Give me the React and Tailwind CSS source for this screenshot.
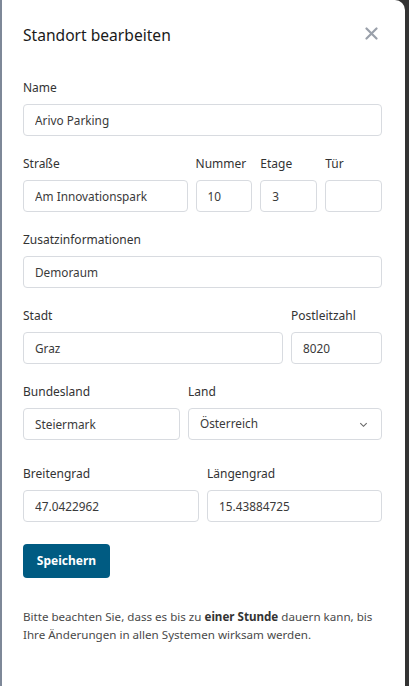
import React from 'react';

const font = { fontFamily: '"Noto Sans", "Open Sans", sans-serif' };

function Field({ label, value, className = '' }) {
  return (
    <div className={`flex flex-col ${className}`}>
      <label className="text-[12px] leading-[20px] text-[#333] mb-[6px] whitespace-nowrap">{label}</label>
      <input
        readOnly
        value={value}
        className="h-[32px] w-full rounded-[4px] border border-[#d8dbe0] bg-white px-[11px] text-[11.8px] text-[#3a3a3a] outline-none"
      />
    </div>
  );
}

export default function App() {
  return (
    <div className="h-screen w-full flex bg-[#333333] overflow-hidden" style={font}>
      <div className="w-[2px] bg-[#7e8898]" />
      <div className="w-[403px] bg-white rounded-tr-[10px] pl-[21px] pr-[23px] pt-[24px]">
        <div className="flex items-center justify-between h-[24px]">
          <h1 className="text-[15.6px] font-normal text-[#1a1a1a]">Standort bearbeiten</h1>
          <button className="text-[#9aa0aa] mr-[4px] -mt-[6px]">
            <svg width="13" height="13" viewBox="0 0 13 13" fill="none" stroke="currentColor" strokeWidth="2.2" strokeLinecap="round">
              <path d="M1.5 1.5L11.5 11.5M11.5 1.5L1.5 11.5" />
            </svg>
          </button>
        </div>

        <div className="mt-[30px] flex flex-col gap-[18px]">
          <Field label="Name" value="Arivo Parking" />

          <div className="flex gap-[8px]">
            <Field label="Straße" value="Am Innovationspark" className="w-[165px]" />
            <Field label="Nummer" value="10" className="w-[57px]" />
            <Field label="Etage" value="3" className="w-[57px]" />
            <Field label="Tür" value="" className="w-[57px]" />
          </div>

          <Field label="Zusatzinformationen" value="Demoraum" />

          <div className="flex gap-[8px]">
            <Field label="Stadt" value="Graz" className="w-[260px]" />
            <Field label="Postleitzahl" value="8020" className="w-[91px]" />
          </div>

          <div className="flex gap-[8px]">
            <Field label="Bundesland" value="Steiermark" className="w-[157px]" />
            <div className="flex flex-col w-[194px]">
              <label className="text-[12px] leading-[20px] text-[#333] mb-[6px]">Land</label>
              <div className="h-[32px] w-full rounded-[4px] border border-[#d8dbe0] bg-white pl-[11px] pr-[12px] flex items-center justify-between text-[11.8px] text-[#3a3a3a]">
                <span>Österreich</span>
                <svg width="11" height="11" viewBox="0 0 12 12" fill="none" stroke="#666" strokeWidth="1.2">
                  <path d="M2.5 4.5L6 8L9.5 4.5" />
                </svg>
              </div>
            </div>
          </div>

          <div className="flex gap-[8px] mt-[6px]">
            <Field label="Breitengrad" value="47.0422962" className="w-[176px]" />
            <Field label="Längengrad" value="15.43884725" className="w-[175px]" />
          </div>
        </div>

        <button className="mt-[22px] h-[34px] w-[87px] rounded-[4px] bg-[#005b82] text-white text-[12px] font-bold">
          Speichern
        </button>

        <p className="mt-[30px] text-[11.6px] leading-[18px] text-[#4a4a4a]">
          Bitte beachten Sie, dass es bis zu <b className="font-bold text-[#333]">einer Stunde</b> dauern kann, bis Ihre Änderungen in allen Systemen wirksam werden.
        </p>
      </div>
    </div>
  );
}
